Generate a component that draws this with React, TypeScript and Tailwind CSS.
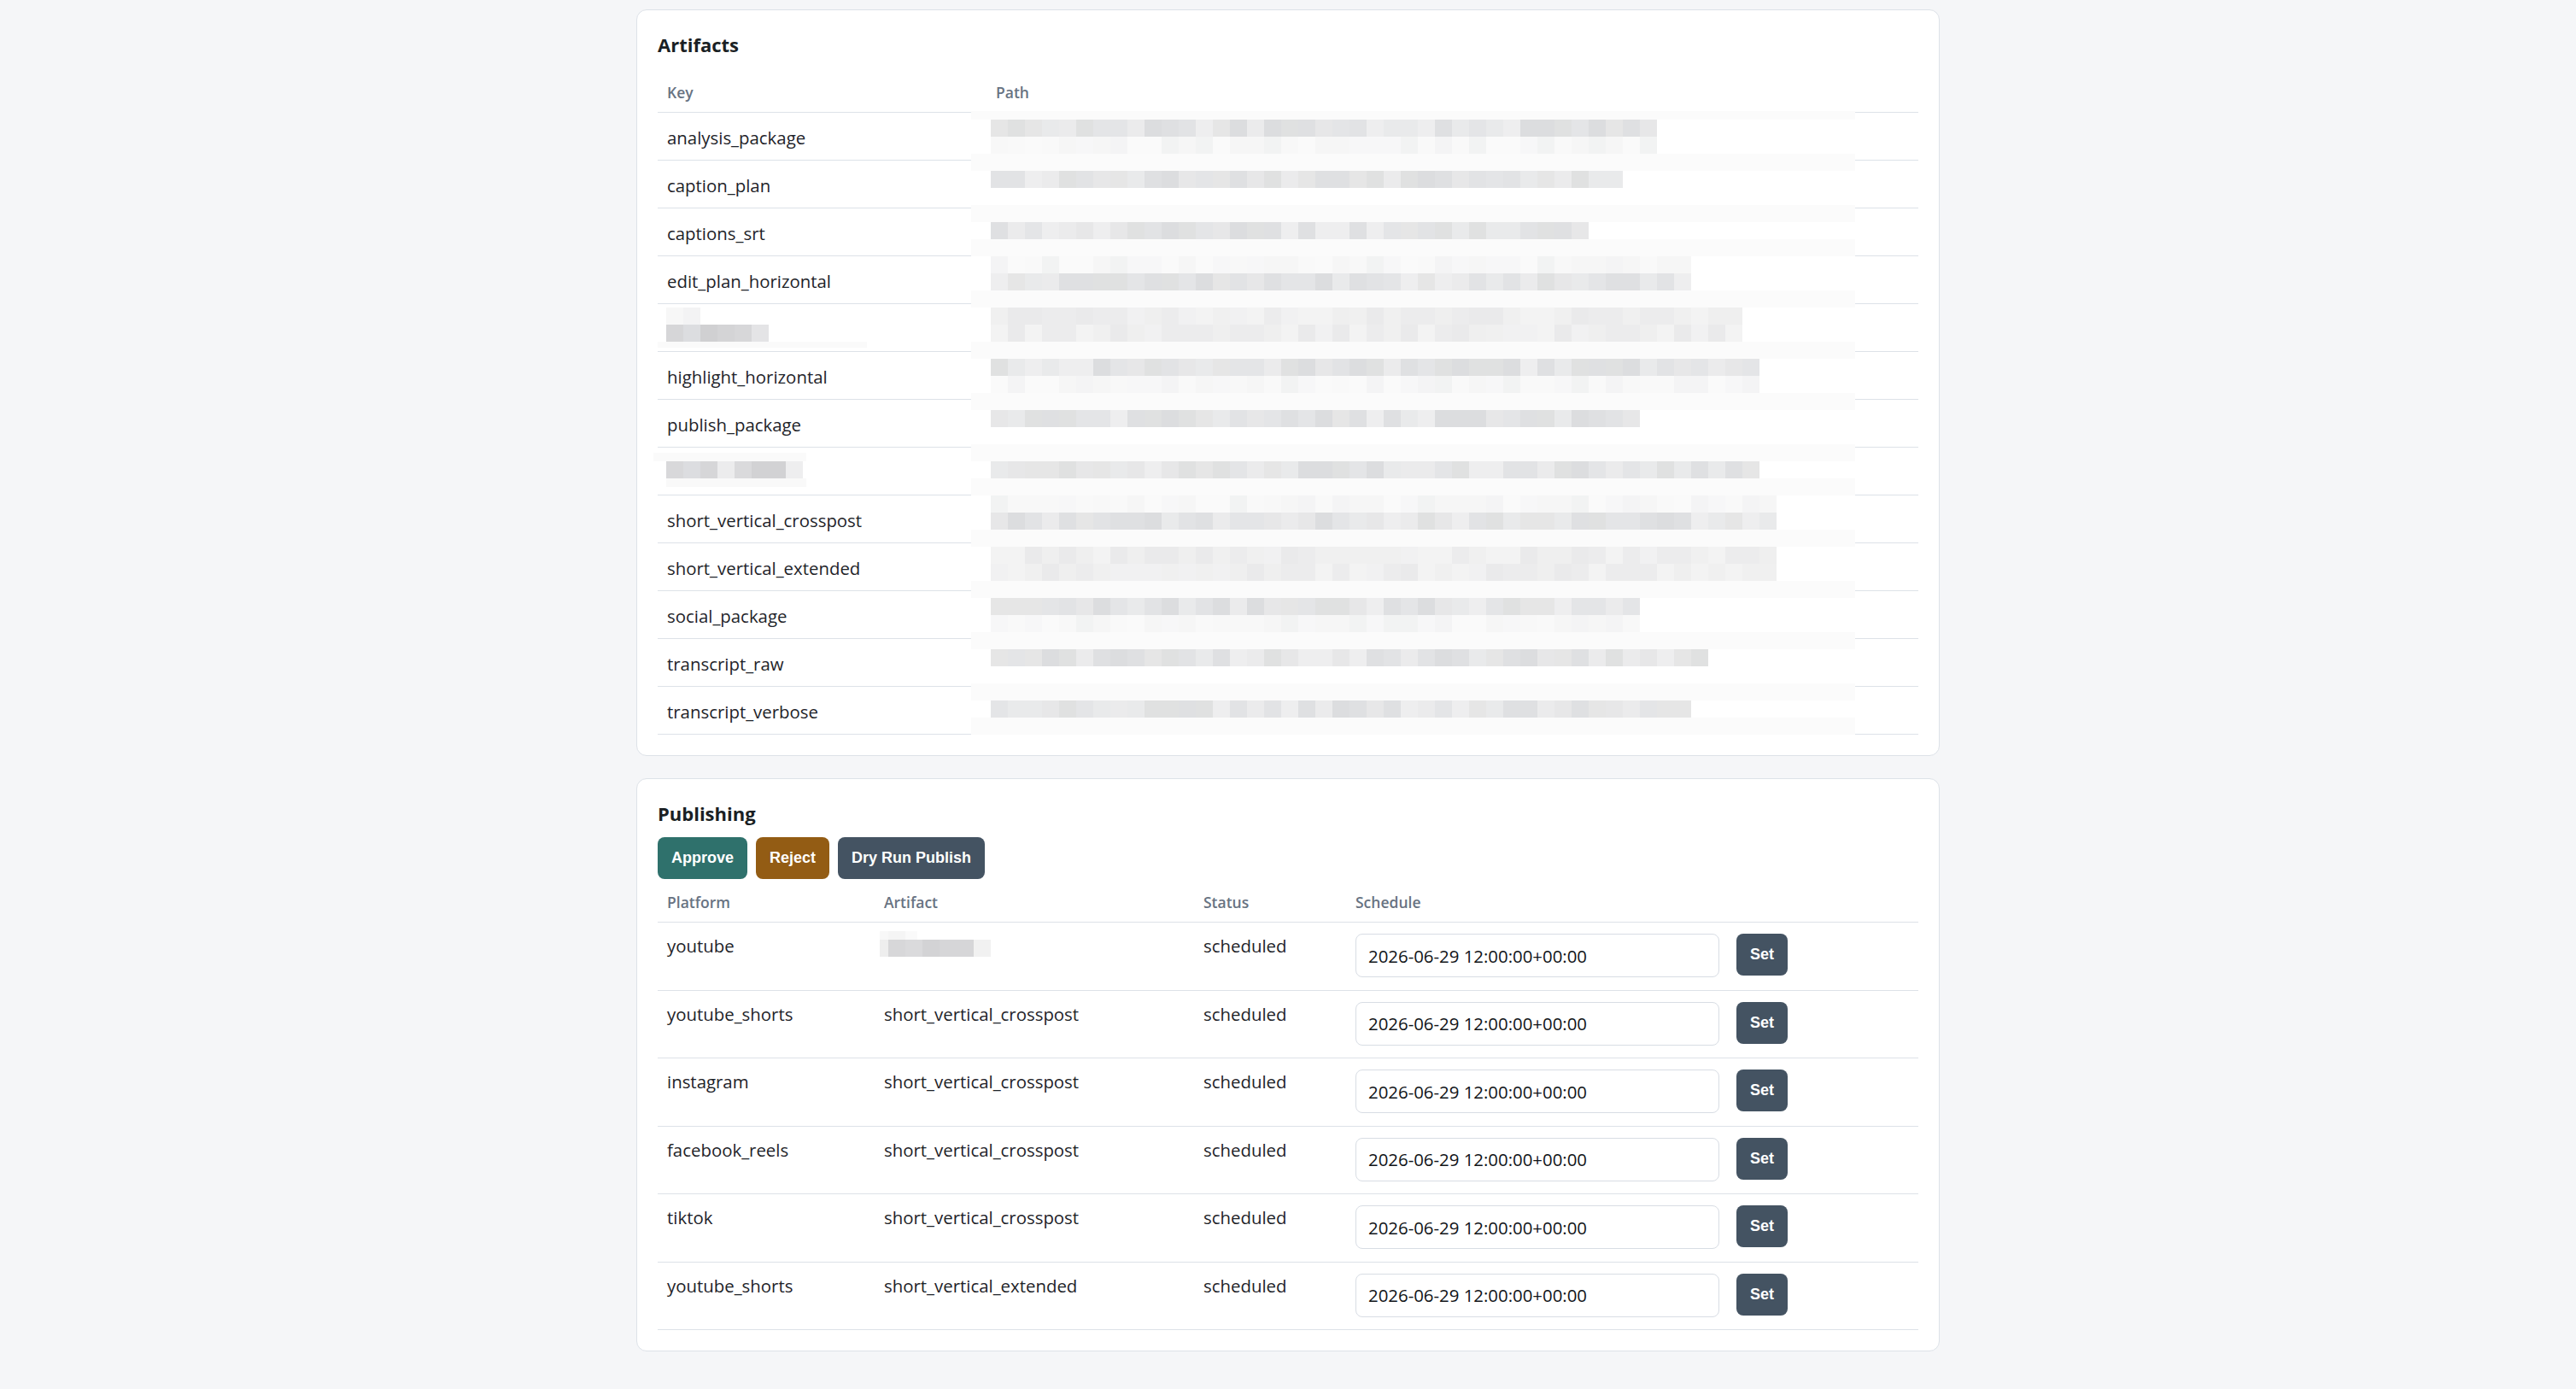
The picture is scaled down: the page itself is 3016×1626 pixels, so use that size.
import React from "react";

// row borders of the artifacts table, page y coords
const BORDERS = Array.from({ length: 14 }, (_, i) => 131 + 56 * i);

const DARK = ["#e2e3e5", "#e7e7e8", "#dfe0e2", "#ebebec", "#e4e5e7", "#dcdddf", "#e9eaeb", "#eeeeef", "#e0e1e1", "#e6e6e6"];
const FAINT = ["#f6f6f6", "#f8f8f8", "#f4f4f5", "#f9f9f9", "#f2f3f3", "#f7f7f8", "#fafafa"];
const LIGHT = ["#efefef", "#f1f1f2", "#ececed", "#f3f3f3", "#eaeaeb", "#f0f0f0"];

type Band = { y: number; kind: "dark" | "faint" | "light"; end: number };

// pixelated path values (redacted in the screenshot)
const PATH_BANDS: Band[] = [
    { y: 140, kind: "dark", end: 1940 },
    { y: 160, kind: "faint", end: 1940 },
    { y: 200, kind: "dark", end: 1900 },
    { y: 260, kind: "dark", end: 1860 },
    { y: 300, kind: "faint", end: 1980 },
    { y: 320, kind: "dark", end: 1980 },
    { y: 360, kind: "light", end: 2040 },
    { y: 380, kind: "light", end: 2040 },
    { y: 420, kind: "dark", end: 2060 },
    { y: 440, kind: "faint", end: 2060 },
    { y: 480, kind: "dark", end: 1920 },
    { y: 540, kind: "dark", end: 2060 },
    { y: 580, kind: "faint", end: 2080 },
    { y: 600, kind: "dark", end: 2080 },
    { y: 640, kind: "light", end: 2080 },
    { y: 660, kind: "light", end: 2080 },
    { y: 700, kind: "dark", end: 1920 },
    { y: 720, kind: "faint", end: 1920 },
    { y: 760, kind: "dark", end: 2000 },
    { y: 820, kind: "dark", end: 1980 },
];

const hash = (x: number, y: number) => (((x * 73856093) ^ (y * 19349663)) >>> 0) % 9973;

function PathRedaction() {
    const bands: React.ReactNode[] = [];
    for (let y = 130; y < 860; ) {
        const h = y === 130 ? 10 : 20;
        const hasLine = BORDERS.some((b) => b >= y && b < y + h);
        const bg = hasLine ? "#fbfbfb" : "#ffffff";
        const band = PATH_BANDS.find((b) => b.y === y);
        if (!band) {
            bands.push(<div key={y} style={{ height: h, background: bg }} />);
        } else {
            const pal = band.kind === "dark" ? DARK : band.kind === "light" ? LIGHT : FAINT;
            const cells: React.ReactNode[] = [];
            for (let x = 1160; x < band.end; x += 20) {
                cells.push(<div key={x} className="w-[20px] shrink-0" style={{ background: pal[hash(x, y) % pal.length] }} />);
            }
            bands.push(
                <div key={y} className="flex" style={{ height: h, background: bg }}>
                    <div className="w-[23px] shrink-0" />
                    {cells}
                </div>
            );
        }
        y += h;
    }
    return <div className="pointer-events-none absolute left-[367px] top-[46px] flex w-[1035px] flex-col">{bands}</div>;
}

function Cells({ colors }: { colors: string[] }) {
    return (
        <>
            {colors.map((c, i) => (
                <div key={i} className="h-[20px] w-[20px] shrink-0" style={{ background: c }} />
            ))}
        </>
    );
}

// redacted key, row 5
function KeyMosaicA() {
    return (
        <div className="flex h-[28px] flex-col">
            <div className="-mt-[11px] -ml-[1px] flex shrink-0 flex-col">
                <div className="flex">
                    <Cells colors={["#f7f7f7", "#f3f3f4"]} />
                </div>
                <div className="flex">
                    <Cells colors={["#d6d6d8", "#dcdde0", "#d0d0d2", "#d4d4d6", "#d7d7d9", "#e4e4e6"]} />
                </div>
                <div className="-ml-[10px] h-[7px] w-[245px] bg-[#fafafa]" />
            </div>
        </div>
    );
}

// redacted key, row 8
function KeyMosaicB() {
    return (
        <div className="flex h-[28px] flex-col">
            <div className="-mt-[9px] -ml-[16px] flex shrink-0 flex-col">
                <div className="h-[10px] w-[179px] bg-[#fafafa]" />
                <div className="ml-[15px] flex">
                    <Cells colors={["#d8d8da", "#dcdde0", "#d6d6d8", "#ececed", "#dadadc", "#d2d2d4", "#d2d2d4", "#eeeeef"]} />
                </div>
                <div className="ml-[15px] h-[10px] w-[164px] bg-[#f9f9f9]" />
            </div>
        </div>
    );
}

// redacted artifact in first publishing row
function ArtifactMosaic() {
    return (
        <div className="flex h-[28px] flex-col">
            <div className="-mt-[3px] -ml-[5px] flex shrink-0 flex-col">
                <div className="flex h-[10px]">
                    <div className="w-[10px] bg-[#f8f8f8]" />
                    <div className="w-[20px] bg-[#f5f5f5]" />
                    <div className="w-[14px] bg-[#fafafa]" />
                </div>
                <div className="flex">
                    <div className="h-[20px] w-[10px] bg-[#eeeeee]" />
                    <Cells colors={["#d7d7d9", "#dadadc", "#d3d3d5", "#d6d6d8", "#d6d6d8", "#f1f1f1"]} />
                </div>
            </div>
        </div>
    );
}

const keys: (string | "A" | "B")[] = [
    "analysis_package",
    "caption_plan",
    "captions_srt",
    "edit_plan_horizontal",
    "A",
    "highlight_horizontal",
    "publish_package",
    "B",
    "short_vertical_crosspost",
    "short_vertical_extended",
    "social_package",
    "transcript_raw",
    "transcript_verbose",
];

const publishing: { platform: string; artifact: string | null }[] = [
    { platform: "youtube", artifact: null },
    { platform: "youtube_shorts", artifact: "short_vertical_crosspost" },
    { platform: "instagram", artifact: "short_vertical_crosspost" },
    { platform: "facebook_reels", artifact: "short_vertical_crosspost" },
    { platform: "tiktok", artifact: "short_vertical_crosspost" },
    { platform: "youtube_shorts", artifact: "short_vertical_extended" },
];

const th = "border-b border-[#dde2e8] px-[11px] pt-[12px] pb-[11px] text-left text-[17.5px] font-semibold leading-[24px] text-[#687382]";
const td = "border-b border-[#dde2e8] px-[11px] text-[20.4px] leading-[28px]";
const btn = "h-[49px] rounded-[8px] px-[16px] font-['Liberation_Sans',Arial,sans-serif] text-[18px] leading-[21px] font-bold text-white";

export default function App() {
    return (
        <div className="min-h-screen bg-[#f5f6f8] pt-[11px] pb-[40px] font-['Open_Sans',sans-serif] text-[#1e2329]">
            {/* Artifacts */}
            <div className="mx-auto w-[1526px] rounded-[12px] border border-[#dde2e8] bg-white p-[24px]">
                <h2 className="mb-[16px] text-[22px] font-bold leading-[32px] text-[#1a1f24]">Artifacts</h2>
                <div className="relative">
                    <table className="w-full table-fixed border-separate border-spacing-0">
                        <colgroup>
                            <col className="w-[385px]" />
                            <col />
                        </colgroup>
                        <thead>
                            <tr>
                                <th className={th}>Key</th>
                                <th className={th}>Path</th>
                            </tr>
                        </thead>
                        <tbody>
                            {keys.map((k, i) => (
                                <tr key={i}>
                                    <td className={`${td} pt-[15px] pb-[12px]`}>
                                        {k === "A" ? <KeyMosaicA /> : k === "B" ? <KeyMosaicB /> : k}
                                    </td>
                                    <td className={`${td} pt-[15px] pb-[12px]`}>
                                        <div className="h-[28px]" />
                                    </td>
                                </tr>
                            ))}
                        </tbody>
                    </table>
                    <PathRedaction />
                </div>
            </div>

            {/* Publishing */}
            <div className="mx-auto mt-[26px] w-[1526px] rounded-[12px] border border-[#dde2e8] bg-white p-[24px]">
                <h2 className="mb-[12px] text-[22px] font-bold leading-[32px] text-[#1a1f24]">Publishing</h2>
                <div className="flex gap-[10px]">
                    <button className={`${btn} bg-[#2f716c]`}>Approve</button>
                    <button className={`${btn} bg-[#935c14]`}>Reject</button>
                    <button className={`${btn} bg-[#445362]`}>Dry Run Publish</button>
                </div>
                <table className="mt-[3px] w-full table-fixed border-separate border-spacing-0">
                    <colgroup>
                        <col className="w-[254px]" />
                        <col className="w-[374px]" />
                        <col className="w-[178px]" />
                        <col className="w-[448px]" />
                        <col />
                    </colgroup>
                    <thead>
                        <tr>
                            <th className={th}>Platform</th>
                            <th className={th}>Artifact</th>
                            <th className={th}>Status</th>
                            <th className={th}>Schedule</th>
                            <th className={th}></th>
                        </tr>
                    </thead>
                    <tbody>
                        {publishing.map((r, i) => (
                            <tr key={i}>
                                <td className={`${td} pt-[13px] pb-[14.5px] align-top`}>{r.platform}</td>
                                <td className={`${td} pt-[13px] pb-[14.5px] align-top`}>{r.artifact ?? <ArtifactMosaic />}</td>
                                <td className={`${td} pt-[13px] pb-[14.5px] align-top`}>scheduled</td>
                                <td className="border-b border-[#dde2e8] px-[11px] pt-[13px] pb-[14.5px] align-top">
                                    <input
                                        defaultValue="2026-06-29 12:00:00+00:00"
                                        className="block h-[51px] w-[426px] rounded-[8px] border border-[#d8dde4] bg-white px-[14px] text-[20.4px] leading-[28px] text-[#111418] outline-none"
                                    />
                                </td>
                                <td className="border-b border-[#dde2e8] pl-[9px] pt-[13px] pb-[14.5px] align-top">
                                    <button className={`${btn} bg-[#445362]`}>Set</button>
                                </td>
                            </tr>
                        ))}
                    </tbody>
                </table>
            </div>
        </div>
    );
}
